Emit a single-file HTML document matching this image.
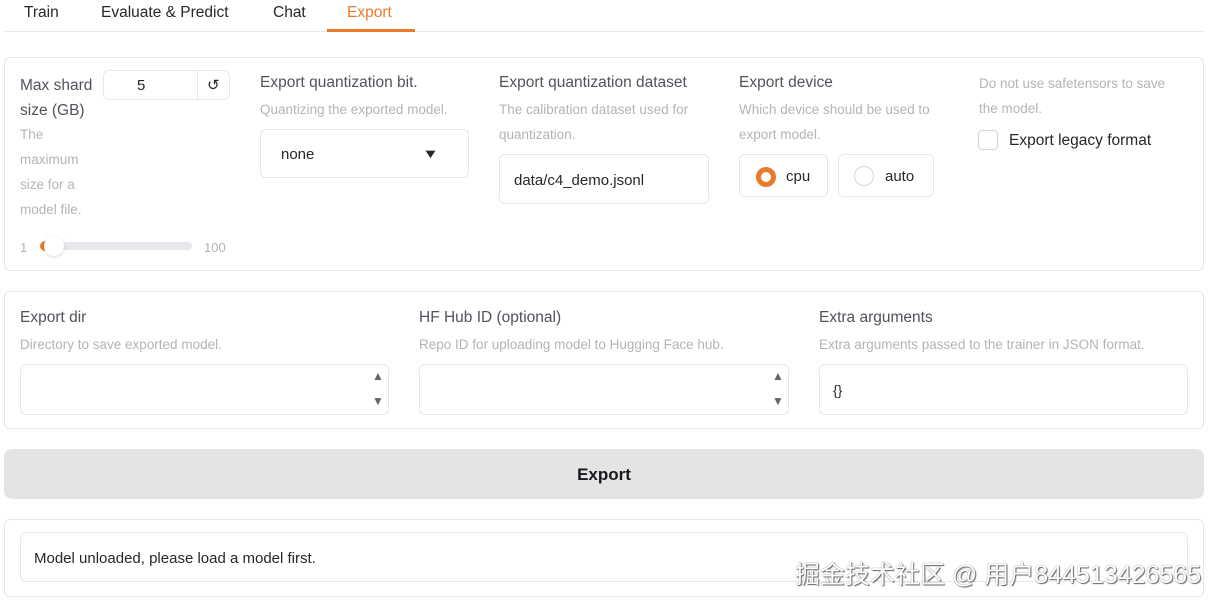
<!DOCTYPE html><html><head><meta charset="utf-8"><style>
body{margin:0;width:1217px;height:604px;background:#fff;font-family:"Liberation Sans","Noto Sans CJK SC",sans-serif;position:relative;overflow:hidden;color:#27272a}
.a{position:absolute;white-space:nowrap}
.box{position:absolute;border:1px solid #e5e7eb;border-radius:6px;background:#fff;box-sizing:border-box}
.lbl{position:absolute;font-size:15.5px;color:#52525b;white-space:nowrap}
.inf{position:absolute;font-size:13.5px;color:#b4b4b8;line-height:25px}
.inp{position:absolute;border:1px solid #e5e7eb;border-radius:6px;box-sizing:border-box;background:#fff;font-size:15px}
.tab{position:absolute;top:4px;font-size:15.5px;color:#27272a}
</style></head><body>
<div class="tab" style="left:24px">Train</div>
<div class="tab" style="left:101px">Evaluate &amp; Predict</div>
<div class="tab" style="left:273px">Chat</div>
<div class="tab" style="left:347px;color:#ea7a2c">Export</div>
<div class="a" style="left:4px;top:31px;width:1200px;height:1px;background:#e5e7eb"></div>
<div class="a" style="left:327px;top:29px;width:88px;height:3px;background:#ea7a2c"></div>

<div class="box" style="left:4px;top:57px;width:1200px;height:214px"></div>
<div class="lbl" style="left:20px;top:73px;line-height:25px">Max shard<br>size (GB)</div>
<div class="inp" style="left:103px;top:70px;width:127px;height:30px"><span class="a" style="left:33px;top:6px">5</span><div class="a" style="left:93px;top:0;width:1px;height:28px;background:#e5e7eb"></div><span class="a" style="left:103px;top:5px;font-size:15px">↺</span></div>
<div class="inf" style="left:20px;top:122px">The<br>maximum<br>size for a<br>model file.</div>
<div class="a" style="left:20px;top:240px;font-size:13px;color:#b4b4b8">1</div>
<div class="a" style="left:42px;top:242px;width:150px;height:8px;background:#e5e7eb;border-radius:4px"></div>
<div class="a" style="left:40px;top:241px;width:8px;height:10px;background:#ea7a2c;border-radius:5px 0 0 5px"></div>
<div class="a" style="left:44px;top:236px;width:20px;height:20px;background:#fff;border-radius:50%;box-shadow:0 1px 3px rgba(0,0,0,.15)"></div>
<div class="a" style="left:204px;top:240px;font-size:13px;color:#b4b4b8">100</div>

<div class="lbl" style="left:260px;top:74px">Export quantization bit.</div>
<div class="inf" style="left:260px;top:97px">Quantizing the exported model.</div>
<div class="inp" style="left:260px;top:129px;width:209px;height:49px"><span class="a" style="left:20px;top:16px">none</span><span class="a" style="left:163px;top:16px;font-size:13px;transform:scaleX(1.3)">▼</span></div>

<div class="lbl" style="left:499px;top:74px">Export quantization dataset</div>
<div class="inf" style="left:499px;top:97px">The calibration dataset used for<br>quantization.</div>
<div class="inp" style="left:499px;top:154px;width:210px;height:50px"><span class="a" style="left:14px;top:17px">data/c4_demo.jsonl</span></div>

<div class="lbl" style="left:739px;top:74px">Export device</div>
<div class="inf" style="left:739px;top:97px">Which device should be used to<br>export model.</div>
<div class="inp" style="left:739px;top:154px;width:89px;height:43px"><div class="a" style="left:16px;top:12px;width:10px;height:10px;border:5px solid #ea7a2c;border-radius:50%;background:#fff"></div><span class="a" style="left:46px;top:13px">cpu</span></div>
<div class="inp" style="left:838px;top:154px;width:96px;height:43px"><div class="a" style="left:15px;top:11px;width:18px;height:18px;border:1px solid #d4d4d8;border-radius:50%"></div><span class="a" style="left:46px;top:13px">auto</span></div>

<div class="inf" style="left:979px;top:71px">Do not use safetensors to save<br>the model.</div>
<div class="a" style="left:978px;top:130px;width:18px;height:18px;border:1px solid #d4d4d8;border-radius:4px"></div>
<div class="a" style="left:1009px;top:132px;font-size:15.5px">Export legacy format</div>

<div class="box" style="left:4px;top:291px;width:1200px;height:138px"></div>
<div class="lbl" style="left:20px;top:309px">Export dir</div>
<div class="inf" style="left:20px;top:332px">Directory to save exported model.</div>
<div class="inp" style="left:20px;top:364px;width:369px;height:51px"><span class="a" style="left:351px;top:4px;font-size:12px;color:#666">▲</span><span class="a" style="left:351px;top:29px;font-size:12px;color:#666">▼</span></div>
<div class="lbl" style="left:419px;top:309px">HF Hub ID (optional)</div>
<div class="inf" style="left:419px;top:332px">Repo ID for uploading model to Hugging Face hub.</div>
<div class="inp" style="left:419px;top:364px;width:370px;height:51px"><span class="a" style="left:352px;top:4px;font-size:12px;color:#666">▲</span><span class="a" style="left:352px;top:29px;font-size:12px;color:#666">▼</span></div>
<div class="lbl" style="left:819px;top:309px">Extra arguments</div>
<div class="inf" style="left:819px;top:332px">Extra arguments passed to the trainer in JSON format.</div>
<div class="inp" style="left:819px;top:364px;width:369px;height:51px"><span class="a" style="left:13px;top:17px;font-size:14px">{}</span></div>

<div class="a" style="left:4px;top:449px;width:1200px;height:50px;background:#e4e4e7;border-radius:8px;text-align:center;line-height:52px;font-size:17px;font-weight:bold;color:#18181b">Export</div>

<div class="box" style="left:4px;top:519px;width:1200px;height:78px"></div>
<div class="inp" style="left:20px;top:532px;width:1168px;height:50px"><span class="a" style="left:13px;top:17px">Model unloaded, please load a model first.</span></div>
<div class="a" style="left:795px;top:555px;font-size:25px;color:#fff;text-shadow:0 0 1px #555,1px 1px 1px #666">掘金技术社区 @ 用户844513426565</div>
</body></html>
